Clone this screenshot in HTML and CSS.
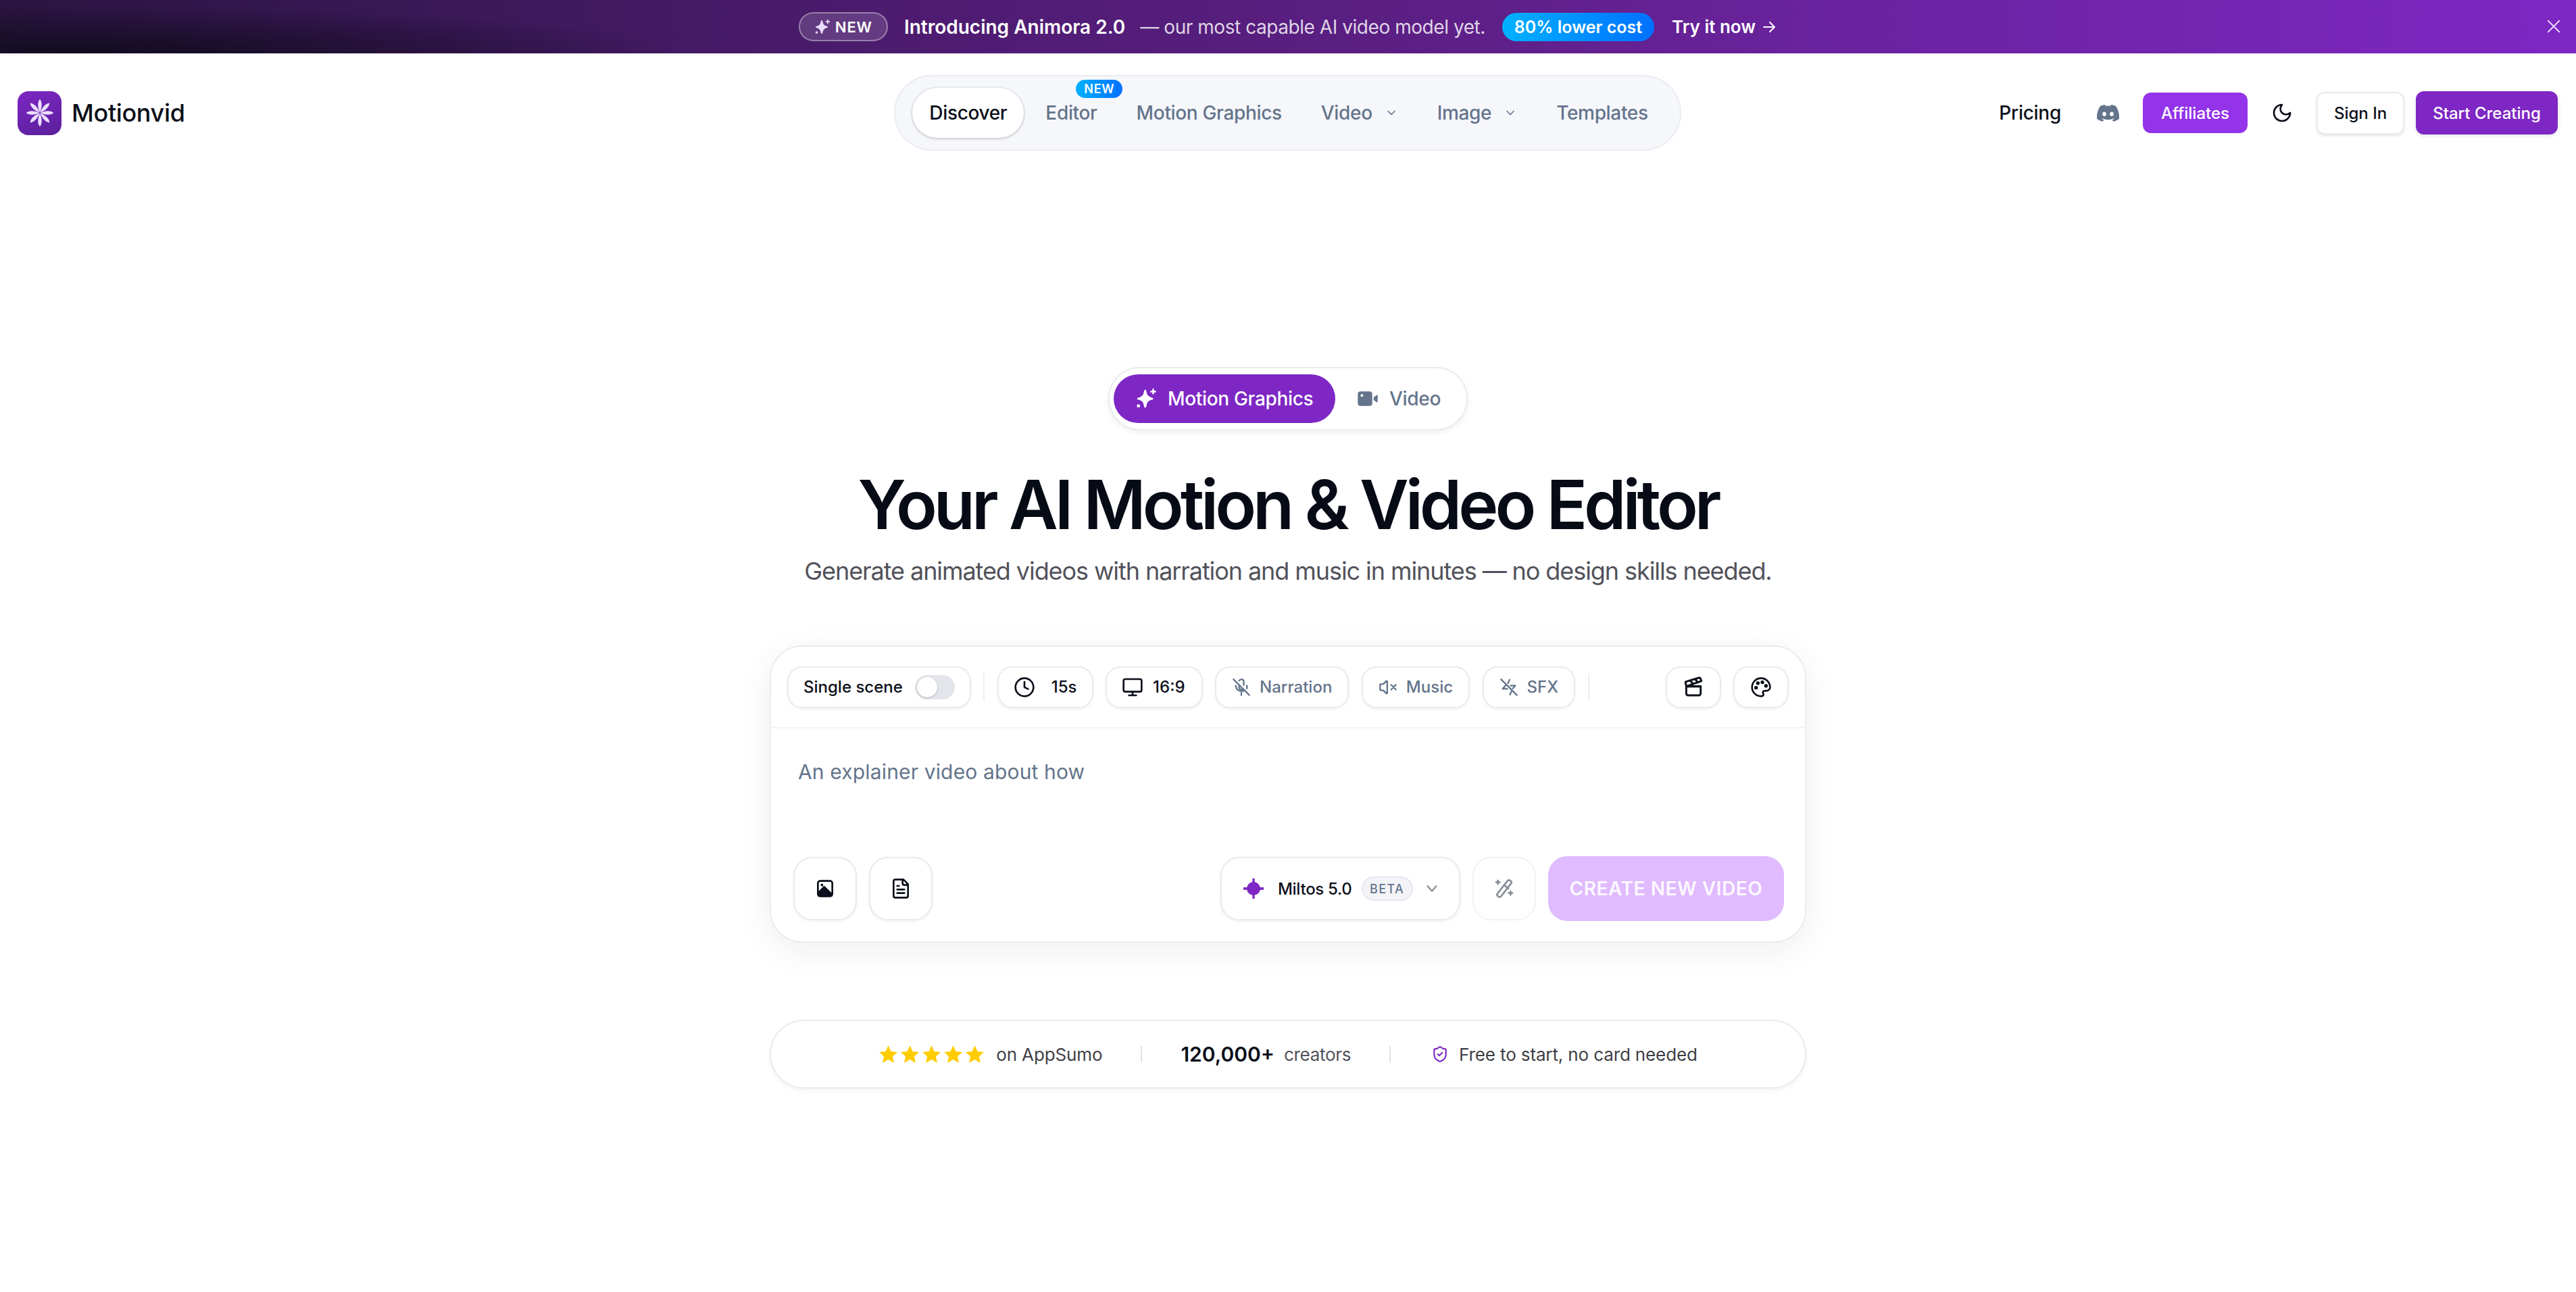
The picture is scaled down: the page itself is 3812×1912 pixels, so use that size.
FILE: index.html
```html
<!DOCTYPE html>
<html lang="en">

<head>
    <meta charset="UTF-8">
    <meta name="viewport" content="width=device-width, initial-scale=1.0">
    <title>Motionvid</title>
    <link rel="stylesheet" href="styles.css">
</head>

<body>
    <!-- announcement -->
    <div class="banner">
        <span class="banner-tag">
            <svg class="icon-24" viewBox="0 0 24 24" fill="#eadcff"><path d="M11 2c1 0 1.300 1 1.500 2.500.5 3.500 2.500 5.500 6 6.300 1 .2 1.500.6 1.500 1.200s-.5 1-1.500 1.200c-3.500.8-5.500 2.800-6 6.300C12.300 21 12 22 11 22s-1.300-1-1.500-2.500c-.5-3.500-2.500-5.500-6-6.300C2.500 13 2 12.600 2 12s.5-1 1.500-1.200c3.500-.8 5.500-2.800 6-6.300C9.700 3 10 2 11 2z"/><path d="M19 1h1.800v2.200H23V5h-2.200v2.200H19V5h-2.200V3.200H19z"/><circle cx="3.500" cy="20" r="1.800"/></svg>
            NEW
        </span>
        <span class="banner-title">Introducing Animora 2.0</span>
        <span class="banner-text">— our most capable AI video model yet.</span>
        <span class="banner-chip">80% lower cost</span>
        <span class="banner-link">Try it now
            <svg class="icon-24" viewBox="0 0 24 24" fill="none" stroke="currentColor" stroke-width="2" stroke-linecap="round" stroke-linejoin="round"><path d="M4 12h16M13 5l7 7-7 7"/></svg>
        </span>
        <svg class="banner-close" viewBox="0 0 24 24" fill="none" stroke="#ecdcff" stroke-width="2" stroke-linecap="round"><path d="M3 3l18 18M21 3L3 21"/></svg>
    </div>

    <!-- top nav -->
    <nav class="nav">
        <div class="brand">
            <span class="brand-logo">
                <svg viewBox="0 0 64 64" width="42" height="42" fill="#ecdfff">
                    <path d="M32 1c6 7 5 19 0 30-5-11-6-23 0-30z"/>
                    <path d="M32 1c6 7 5 19 0 30-5-11-6-23 0-30z" transform="rotate(45 32 32)"/>
                    <path d="M32 1c6 7 5 19 0 30-5-11-6-23 0-30z" transform="rotate(90 32 32)"/>
                    <path d="M32 1c6 7 5 19 0 30-5-11-6-23 0-30z" transform="rotate(135 32 32)"/>
                    <path d="M32 1c6 7 5 19 0 30-5-11-6-23 0-30z" transform="rotate(180 32 32)"/>
                    <path d="M32 1c6 7 5 19 0 30-5-11-6-23 0-30z" transform="rotate(225 32 32)"/>
                    <path d="M32 1c6 7 5 19 0 30-5-11-6-23 0-30z" transform="rotate(270 32 32)"/>
                    <path d="M32 1c6 7 5 19 0 30-5-11-6-23 0-30z" transform="rotate(315 32 32)"/>
                </svg>
            </span>
            <span class="brand-name">Motionvid</span>
        </div>

        <div class="nav-pill">
            <a class="nav-item active">Discover</a>
            <a class="nav-item">Editor<span class="nav-new">NEW</span></a>
            <a class="nav-item">Motion Graphics</a>
            <a class="nav-item">Video
                <svg class="nav-chevron" viewBox="0 0 24 24" fill="none" stroke="currentColor" stroke-width="2" stroke-linecap="round" stroke-linejoin="round"><path d="M6 9l6 6 6-6"/></svg>
            </a>
            <a class="nav-item">Image
                <svg class="nav-chevron" viewBox="0 0 24 24" fill="none" stroke="currentColor" stroke-width="2" stroke-linecap="round" stroke-linejoin="round"><path d="M6 9l6 6 6-6"/></svg>
            </a>
            <a class="nav-item">Templates</a>
        </div>

        <div class="nav-right">
            <a class="pricing">Pricing</a>
            <span class="discord">
                <svg viewBox="0 0 24 24" width="33" height="33" fill="#64748b"><path d="M20.317 4.37a19.791 19.791 0 0 0-4.885-1.515.074.074 0 0 0-.079.037c-.21.375-.444.864-.608 1.25a18.27 18.27 0 0 0-5.487 0 12.64 12.64 0 0 0-.617-1.25.077.077 0 0 0-.079-.037A19.736 19.736 0 0 0 3.677 4.37a.07.07 0 0 0-.032.027C.533 9.046-.32 13.58.099 18.057a.082.082 0 0 0 .031.057 19.9 19.9 0 0 0 5.993 3.03.078.078 0 0 0 .084-.028 14.09 14.09 0 0 0 1.226-1.994.076.076 0 0 0-.041-.106 13.107 13.107 0 0 1-1.872-.892.077.077 0 0 1-.008-.128 10.2 10.2 0 0 0 .372-.292.074.074 0 0 1 .077-.01c3.928 1.793 8.18 1.793 12.062 0a.074.074 0 0 1 .078.01c.12.098.246.198.373.292a.077.077 0 0 1-.006.127 12.299 12.299 0 0 1-1.873.892.077.077 0 0 0-.041.107c.36.698.772 1.362 1.225 1.993a.076.076 0 0 0 .084.028 19.839 19.839 0 0 0 6.002-3.03.077.077 0 0 0 .032-.054c.5-5.177-.838-9.674-3.549-13.66a.061.061 0 0 0-.031-.03zM8.02 15.33c-1.183 0-2.157-1.085-2.157-2.419 0-1.333.956-2.419 2.157-2.419 1.21 0 2.176 1.096 2.157 2.42 0 1.333-.956 2.418-2.157 2.418zm7.975 0c-1.183 0-2.157-1.085-2.157-2.419 0-1.333.955-2.419 2.157-2.419 1.21 0 2.176 1.096 2.157 2.42 0 1.333-.946 2.418-2.157 2.418z"/></svg>
            </span>
            <a class="btn-affiliates">Affiliates</a>
            <span class="moon">
                <svg viewBox="0 0 24 24" width="32" height="32" fill="none" stroke="#0b0f19" stroke-width="2" stroke-linecap="round" stroke-linejoin="round"><path d="M12 3a6 6 0 0 0 9 9 9 9 0 1 1-9-9z"/></svg>
            </span>
            <a class="btn-signin">Sign In</a>
            <a class="btn-start">Start Creating</a>
        </div>
    </nav>

    <main class="hero">
        <div class="mode-tabs">
            <span class="mode-tab selected">
                <svg class="icon-32" viewBox="0 0 24 24" fill="#fff"><path d="M11 2c1 0 1.300 1 1.500 2.500.5 3.500 2.500 5.500 6 6.300 1 .2 1.500.6 1.500 1.200s-.5 1-1.500 1.200c-3.500.8-5.500 2.800-6 6.300C12.300 21 12 22 11 22s-1.300-1-1.500-2.500c-.5-3.500-2.500-5.500-6-6.300C2.500 13 2 12.600 2 12s.5-1 1.500-1.200c3.500-.8 5.500-2.800 6-6.300C9.700 3 10 2 11 2z"/><path d="M19 1h1.800v2.200H23V5h-2.200v2.200H19V5h-2.200V3.200H19z"/><circle cx="3.500" cy="20" r="1.800"/></svg>
                Motion Graphics
            </span>
            <span class="mode-tab">
                <svg class="icon-32" viewBox="0 0 24 24" fill="#64748b"><rect x="1" y="4" width="16" height="16" rx="3"/><path d="M18.500 10.500l3.500-2.500c.5-.3 1-.1 1 .5v7c0 .6-.5.8-1 .5l-3.500-2.500z"/><circle cx="5.500" cy="8.500" r="1.500" fill="#fff"/></svg>
                Video
            </span>
        </div>

        <h1 class="hero-title">Your AI Motion &amp; Video Editor</h1>
        <p class="hero-sub">Generate animated videos with narration and music in minutes — no design skills needed.</p>

        <section class="prompt-card">
            <div class="toolbar">
                <span class="tool">Single scene<span class="toggle"><span class="toggle-knob"></span></span></span>
                <span class="tool-sep"></span>
                <span class="tool tool-time">
                    <svg class="icon-32" viewBox="0 0 24 24" fill="none" stroke="currentColor" stroke-width="2" stroke-linecap="round" stroke-linejoin="round"><circle cx="12" cy="12" r="10"/><path d="M12 6v6l4 2"/></svg>
                    15s
                </span>
                <span class="tool tool-ratio">
                    <svg class="icon-32" viewBox="0 0 24 24" fill="none" stroke="currentColor" stroke-width="2" stroke-linecap="round" stroke-linejoin="round"><rect x="2" y="3" width="20" height="14" rx="2"/><path d="M8 21h8M12 17v4"/></svg>
                    16:9
                </span>
                <span class="tool muted">
                    <svg class="icon-28" viewBox="0 0 24 24" fill="none" stroke="currentColor" stroke-width="2" stroke-linecap="round" stroke-linejoin="round"><path d="M2 2l20 20M18.900 13.500A7 7 0 0 0 19 10M15 9.300V5a3 3 0 0 0-5.700-1.300M9 9v3a3 3 0 0 0 5.100 2.100M5 10a7 7 0 0 0 11.200 5.600M12 19v3"/></svg>
                    Narration
                </span>
                <span class="tool muted">
                    <svg class="icon-28" viewBox="0 0 24 24" fill="none" stroke="currentColor" stroke-width="2" stroke-linecap="round" stroke-linejoin="round"><path d="M11 4.700a.7.7 0 0 0-1.200-.5L6.400 7.600A1.400 1.400 0 0 1 5.400 8H3a1 1 0 0 0-1 1v6a1 1 0 0 0 1 1h2.400a1.400 1.400 0 0 1 1 .4l3.400 3.400a.7.7 0 0 0 1.200-.5z"/><path d="M22 9l-6 6M16 9l6 6"/></svg>
                    Music
                </span>
                <span class="tool muted">
                    <svg class="icon-28" viewBox="0 0 24 24" fill="none" stroke="currentColor" stroke-width="2" stroke-linecap="round" stroke-linejoin="round"><path d="M2 2l20 20M12.700 2.500L10.800 7M14 10h6l-3 3.500M10 14H4l4.500-5.200M13.300 21.500l2-4.700"/></svg>
                    SFX
                </span>
                <span class="tool-sep"></span>
                <span class="toolbar-right">
                    <span class="tool tool-square">
                        <svg class="icon-32" viewBox="0 0 24 24" fill="none" stroke="currentColor" stroke-width="2.200" stroke-linecap="round" stroke-linejoin="round"><path d="M4 11v8a2 2 0 0 0 2 2h12a2 2 0 0 0 2-2v-8z"/><path d="M4 11h16"/><path d="M4.200 11l-.9-3a2 2 0 0 1 1.300-2.500l13-3.800a2 2 0 0 1 2.500 1.300l.6 2.200z"/><path d="M8.500 4.800l3 3.400M14 3.300l3 3.400"/></svg>
                    </span>
                    <span class="tool tool-square">
                        <svg class="icon-32" viewBox="0 0 24 24" fill="none" stroke="currentColor" stroke-width="2" stroke-linecap="round" stroke-linejoin="round"><path d="M12 22a10 10 0 1 1 10-10c0 2.800-2.200 4-4.500 4H16a2 2 0 0 0-1.500 3.300c.6.800.2 2.700-2.500 2.700z"/><circle cx="13.500" cy="6.500" r="1" fill="currentColor"/><circle cx="17.500" cy="10.500" r="1" fill="currentColor"/><circle cx="6.500" cy="12.500" r="1" fill="currentColor"/><circle cx="8.500" cy="7.500" r="1" fill="currentColor"/></svg>
                    </span>
                </span>
            </div>

            <div class="prompt-text">An explainer video about how</div>

            <div class="prompt-actions">
                <span class="square-btn">
                    <svg class="icon-32" viewBox="0 0 24 24" fill="none" stroke="#0b0f19" stroke-width="2" stroke-linejoin="round"><rect x="4" y="3.500" width="16" height="17" rx="2.500"/><circle cx="8.500" cy="8" r="1.500" fill="#0b0f19" stroke="none"/><path d="M5 20v-4l6-6 8 8v2z" fill="#0b0f19"/></svg>
                </span>
                <span class="square-btn">
                    <svg class="icon-32" viewBox="0 0 24 24" fill="none" stroke="#0b0f19" stroke-width="2" stroke-linecap="round" stroke-linejoin="round"><path d="M15 2H6a2 2 0 0 0-2 2v16a2 2 0 0 0 2 2h12a2 2 0 0 0 2-2V7z"/><path d="M14 2v4a2 2 0 0 0 2 2h4M10 9H8M16 13H8M16 17H8"/></svg>
                </span>
                <span class="model-select">
                    <svg class="icon-30" viewBox="0 0 24 24" fill="#7e27c4"><circle cx="12" cy="12" r="8"/><rect x="10.700" width="2.600" height="24"/><rect y="10.500" width="24" height="3"/></svg>
                    <span class="model-name">Miltos 5.0</span>
                    <span class="model-beta">BETA</span>
                    <svg class="model-chevron" viewBox="0 0 24 24" fill="none" stroke="#858b98" stroke-width="2.400" stroke-linecap="round" stroke-linejoin="round"><path d="M5 8l7 8 7-8"/></svg>
                </span>
                <span class="square-btn wand">
                    <svg class="icon-32" viewBox="0 0 24 24" fill="none" stroke="#8a8f99" stroke-width="2" stroke-linecap="round" stroke-linejoin="round"><rect x="9.500" y="1" width="5" height="22" rx="2" transform="rotate(38 12 12)"/><path d="M12.500 8.500l4 3.500M5 3v4M3 5h4M19 15v4M17 17h4"/></svg>
                </span>
                <span class="create-btn">CREATE NEW VIDEO</span>
            </div>
        </section>

        <section class="trust-bar">
            <span class="trust-group group-rating">
                <span class="stars">
                    <svg class="star" viewBox="0 0 24 24" fill="#ffcc00"><path d="M12 1l3.300 7.300 7.900.9-5.900 5.300 1.700 7.800L12 18.300l-7 4 1.700-7.800L.8 9.200l7.900-.9z"/></svg>
                    <svg class="star" viewBox="0 0 24 24" fill="#ffcc00"><path d="M12 1l3.300 7.300 7.900.9-5.900 5.300 1.700 7.800L12 18.300l-7 4 1.700-7.800L.8 9.200l7.900-.9z"/></svg>
                    <svg class="star" viewBox="0 0 24 24" fill="#ffcc00"><path d="M12 1l3.300 7.300 7.900.9-5.900 5.300 1.700 7.800L12 18.300l-7 4 1.700-7.800L.8 9.200l7.900-.9z"/></svg>
                    <svg class="star" viewBox="0 0 24 24" fill="#ffcc00"><path d="M12 1l3.300 7.300 7.900.9-5.900 5.300 1.700 7.800L12 18.300l-7 4 1.700-7.800L.8 9.200l7.900-.9z"/></svg>
                    <svg class="star" viewBox="0 0 24 24" fill="#ffcc00"><path d="M12 1l3.300 7.300 7.900.9-5.900 5.300 1.700 7.800L12 18.300l-7 4 1.700-7.800L.8 9.200l7.900-.9z"/></svg>
                </span>
                <span class="trust-text">on AppSumo</span>
            </span>
            <span class="trust-sep"></span>
            <span class="trust-group">
                <strong class="trust-num">120,000+</strong>
                <span class="trust-light">creators</span>
            </span>
            <span class="trust-sep"></span>
            <span class="trust-group group-free">
                <svg class="icon-26" viewBox="0 0 24 24" fill="none" stroke="#7e27c4" stroke-width="2" stroke-linecap="round" stroke-linejoin="round"><path d="M20 13c0 5-3.500 7.500-7.700 9a1 1 0 0 1-.7 0C7.500 20.500 4 18 4 13V6a1 1 0 0 1 1-1c2 0 4.500-1.200 6.200-2.700a1.200 1.200 0 0 1 1.600 0C14.500 3.800 17 5 19 5a1 1 0 0 1 1 1z"/><path d="M9 12l2 2 4-4"/></svg>
                <span class="trust-text">Free to start, no card needed</span>
            </span>
        </section>
    </main>
</body>

</html>
```

FILE: styles.css
```css
* {
    box-sizing: border-box;
}

body {
    margin: 0;
    min-height: 1912px;
    background-color: #fff;
    color: #0b0f19;
    font-family: Inter, "Noto Sans", sans-serif;
}

svg {
    flex-shrink: 0;
    display: block;
}

.icon-24 { width: 24px; height: 24px; }
.icon-26 { width: 26px; height: 30px; }
.icon-28 { width: 28px; height: 28px; }
.icon-30 { width: 30px; height: 30px; }
.icon-32 { width: 32px; height: 32px; }

/* banner */
.banner {
    position: relative;
    height: 79px;
    display: flex;
    align-items: center;
    justify-content: center;
    color: #fff;
    font-size: 28px;
    white-space: nowrap;
    background:
        radial-gradient(ellipse 900px 70px at 120px 100%, rgba(12, 10, 24, 0.85), rgba(12, 10, 24, 0)),
        linear-gradient(90deg, #2a1440 0%, #4a1b6c 32%, #5c1f85 55%, #6b23a0 72%, #7e27c4 100%);
}

.banner-tag {
    display: flex;
    align-items: center;
    gap: 7px;
    width: 132px;
    height: 43px;
    justify-content: center;
    border: 2px solid rgba(255, 255, 255, 0.35);
    border-radius: 22px;
    background-color: rgba(255, 255, 255, 0.14);
    font-size: 22px;
    font-weight: 600;
    letter-spacing: 0.04em;
}

.banner-title {
    margin-left: 24px;
    font-weight: 600;
}

.banner-text {
    margin-left: 22px;
    color: rgba(255, 255, 255, 0.82);
    letter-spacing: -0.016em;
}

.banner-chip {
    margin-left: 25px;
    height: 42px;
    padding: 0 18px;
    display: flex;
    align-items: center;
    border-radius: 21px;
    background: linear-gradient(90deg, #00b2ff, #0070ff);
    font-size: 25px;
    font-weight: 600;
}

.banner-link {
    margin-left: 26px;
    display: flex;
    align-items: center;
    gap: 8px;
    font-size: 26px;
    font-weight: 600;
}

/* sits over the banner's right edge */
.banner-close {
    position: absolute;
    right: 22px;
    top: 28px;
    width: 22px;
    height: 22px;
}

/* nav */
.nav {
    display: grid;
    grid-template-columns: 1fr auto 1fr;
    align-items: center;
    padding: 32px 27px 0 26px;
}

.brand {
    display: flex;
    align-items: center;
    gap: 15px;
}

.brand-logo {
    width: 65px;
    height: 65px;
    border-radius: 16px;
    display: flex;
    align-items: center;
    justify-content: center;
    background: linear-gradient(160deg, #7e27c4, #5a1f9a);
}

.brand-name {
    font-size: 36px;
    font-weight: 500;
    letter-spacing: -0.01em;
}

.nav-pill {
    height: 112px;
    display: flex;
    align-items: center;
    gap: 6px;
    padding: 0 21px 0 25px;
    border: 2px solid #eaecf2;
    border-radius: 56px;
    background-color: #f6f7fb;
}

.nav-item {
    position: relative;
    height: 74px;
    display: flex;
    align-items: center;
    padding: 0 26px;
    border-radius: 37px;
    color: #64748b;
    font-size: 28px;
    font-weight: 500;
    letter-spacing: -0.012em;
}

.nav-item.active {
    padding: 0 25px;
    color: #0b0f19;
    background-color: #fff;
    box-shadow: 0 2px 4px rgba(15, 23, 42, 0.14), 0 0 0 2px #e9eaef;
}

.nav-chevron {
    width: 20px;
    height: 20px;
    margin-left: 18px;
}

.nav-new {
    position: absolute;
    top: -12px;
    left: 71px;
    width: 69px;
    height: 27px;
    display: flex;
    align-items: center;
    justify-content: center;
    border-radius: 14px;
    background: linear-gradient(90deg, #00b2ff, #0070ff);
    color: #fff;
    font-size: 18px;
    font-weight: 600;
    letter-spacing: 0.04em;
}

.nav-right {
    display: flex;
    align-items: center;
    justify-content: flex-end;
    gap: 17px;
    font-size: 26px;
    font-weight: 450;
}

.pricing {
    padding-right: 18px;
    font-size: 28px;
    letter-spacing: -0.01em;
}

.discord {
    padding: 0 18px;
}

.moon {
    padding: 0 18px;
}

.btn-affiliates,
.btn-signin,
.btn-start {
    display: flex;
    align-items: center;
    justify-content: center;
    border-radius: 12px;
    font-size: 24px;
}

.btn-affiliates {
    width: 155px;
    height: 60px;
    background-color: #9333ea;
    color: #fff;
}

.btn-signin {
    width: 130px;
    height: 63px;
    border: 2px solid #e9eaef;
    box-shadow: 0 2px 4px rgba(15, 23, 42, 0.12);
}

.btn-start {
    width: 210px;
    height: 64px;
    background-color: #7e27c4;
    color: #fff;
    box-shadow: 0 2px 6px rgba(15, 23, 42, 0.12);
}

/* hero */
.hero {
    display: flex;
    flex-direction: column;
    align-items: center;
    padding-top: 320px;
}

.mode-tabs {
    width: 532px;
    height: 94px;
    display: flex;
    align-items: center;
    padding: 0 6px;
    border: 2px solid #e9ecf3;
    border-radius: 47px;
    background-color: #fff;
    box-shadow: 0 3px 8px rgba(15, 23, 42, 0.07);
}

.mode-tab {
    height: 72px;
    display: flex;
    align-items: center;
    gap: 16px;
    padding: 0 32px;
    border-radius: 36px;
    color: #64748b;
    font-size: 28px;
    font-weight: 500;
    letter-spacing: -0.012em;
    white-space: nowrap;
}

.mode-tab.selected {
    width: 329px;
    background-color: #7e27c4;
    color: #fff;
}

.hero-title {
    margin: 50px 0 0;
    font-size: 100px;
    line-height: 120px;
    font-weight: 600;
    letter-spacing: -0.05em;
    color: #060b16;
}

.hero-sub {
    margin: 12px 0 0;
    font-size: 36px;
    line-height: 52px;
    color: #52525b;
    letter-spacing: -0.03em;
}

/* prompt card */
.prompt-card {
    width: 1534px;
    height: 440px;
    margin-top: 84px;
    border: 2px solid #eaecf3;
    border-radius: 48px;
    background-color: #fff;
    box-shadow: 0 12px 48px rgba(15, 23, 42, 0.07);
}

.toolbar {
    height: 121px;
    display: flex;
    align-items: center;
    gap: 18.5px;
    padding: 0 24px;
    border-bottom: 2px solid #f2f3f7;
}

.tool {
    height: 62px;
    display: flex;
    align-items: center;
    gap: 16px;
    padding: 0 22px;
    border: 2px solid #e9eaf0;
    border-radius: 22px;
    background-color: #fff;
    box-shadow: 0 2px 4px rgba(15, 23, 42, 0.05);
    font-size: 24px;
    font-weight: 450;
    white-space: nowrap;
}

.tool-time {
    gap: 24px;
}

.tool-ratio {
    gap: 14px;
    padding-right: 24px;
}

.tool.muted {
    gap: 13px;
    padding: 0 23px;
    color: #64748b;
}

.tool-sep {
    width: 2px;
    height: 40px;
    background-color: #eceef3;
}

.toolbar-right {
    margin-left: auto;
    display: flex;
    gap: 18px;
}

.tool-square {
    width: 82px;
    justify-content: center;
    padding: 0;
}

.toggle {
    width: 59px;
    height: 36px;
    margin-left: 2px;
    padding: 3px;
    border-radius: 18px;
    background-color: #e4e5ea;
}

.toggle-knob {
    display: block;
    width: 30px;
    height: 30px;
    border-radius: 50%;
    background-color: #fff;
    box-shadow: 0 1px 3px rgba(15, 23, 42, 0.25);
}

.prompt-text {
    height: 189px;
    padding: 46px 40px 0;
    font-size: 30px;
    line-height: 36px;
    color: #64748b;
    letter-spacing: 0.005em;
}

.prompt-actions {
    display: flex;
    align-items: center;
    gap: 18px;
    padding: 0 31px 0 33px;
}

.square-btn {
    width: 94px;
    height: 94px;
    display: flex;
    align-items: center;
    justify-content: center;
    border: 2px solid #e9eaf0;
    border-radius: 28px;
    background-color: #fff;
    box-shadow: 0 2px 4px rgba(15, 23, 42, 0.05);
}

.model-select {
    width: 355px;
    height: 94px;
    margin-left: auto;
    display: flex;
    align-items: center;
    padding: 0 30px 0 32px;
    border: 2px solid #e9eaf0;
    border-radius: 28px;
    box-shadow: 0 2px 4px rgba(15, 23, 42, 0.07);
    white-space: nowrap;
}

.model-name {
    margin-left: 21px;
    font-size: 24px;
    font-weight: 450;
    letter-spacing: -0.012em;
}

.model-beta {
    flex-shrink: 0;
    margin-left: 14px;
    width: 76px;
    height: 36px;
    display: flex;
    align-items: center;
    justify-content: center;
    border: 2px solid #e6e8ee;
    border-radius: 18px;
    background-color: #f3f4f8;
    color: #64748b;
    font-size: 18px;
    font-weight: 500;
    letter-spacing: 0.08em;
}

.model-chevron {
    width: 22px;
    height: 22px;
    margin-left: 17px;
}

.wand {
    box-shadow: none;
    border-color: #f1f2f5;
}

.create-btn {
    width: 349px;
    height: 96px;
    display: flex;
    align-items: center;
    justify-content: center;
    border-radius: 28px;
    background-color: #e0bbff;
    color: rgba(255, 255, 255, 0.92);
    font-size: 28px;
    font-weight: 600;
    letter-spacing: 0.02em;
}

/* trust bar */
.trust-bar {
    width: 1534px;
    height: 102px;
    margin-top: 114px;
    display: flex;
    align-items: center;
    justify-content: center;
    gap: 57px;
    border: 2px solid #e9eaf0;
    border-radius: 51px;
    box-shadow: 0 3px 6px rgba(15, 23, 42, 0.05);
}

.trust-group {
    display: flex;
    align-items: center;
    gap: 14px;
}

.group-rating {
    gap: 17px;
}

.group-free {
    gap: 15px;
    margin-left: 3px;
}

.stars {
    display: flex;
    gap: 3px;
}

.star {
    width: 29px;
    height: 29px;
}

.trust-text {
    color: #3f3f46;
    font-size: 26px;
    letter-spacing: -0.005em;
}

.trust-light {
    color: #52525b;
    font-size: 26px;
    letter-spacing: -0.012em;
}

.trust-num {
    font-size: 30px;
    font-weight: 600;
}

.trust-sep {
    width: 2px;
    height: 24px;
    background-color: #e2e3e8;
}
```
